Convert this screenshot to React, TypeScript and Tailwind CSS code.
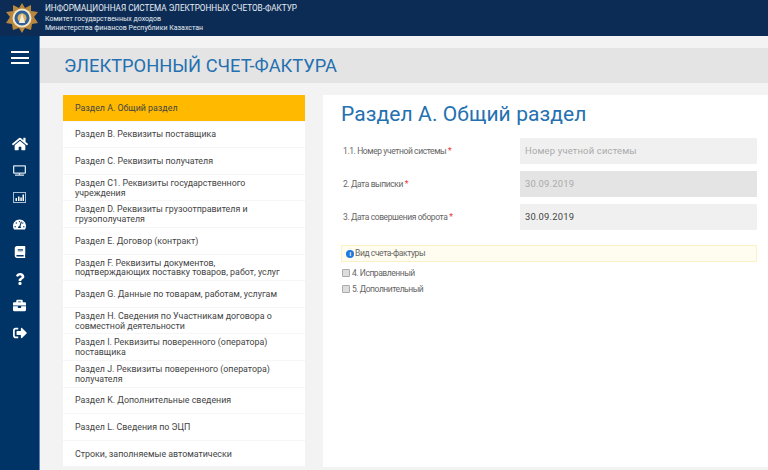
import { FaHome, FaTv, FaBook, FaQuestion, FaBriefcase, FaSignOutAlt, FaTachometerAlt } from "react-icons/fa";

const items: string[] = [
  "Раздел А. Общий раздел",
  "Раздел В. Реквизиты поставщика",
  "Раздел С. Реквизиты получателя",
  "Раздел С1. Реквизиты государственного учреждения",
  "Раздел D. Реквизиты грузоотправителя и грузополучателя",
  "Раздел Е. Договор (контракт)",
  "Раздел F. Реквизиты документов, подтверждающих поставку товаров, работ, услуг",
  "Раздел G. Данные по товарам, работам, услугам",
  "Раздел H. Сведения по Участникам договора о совместной деятельности",
  "Раздел I. Реквизиты поверенного (оператора) поставщика",
  "Раздел J. Реквизиты поверенного (оператора) получателя",
  "Раздел K. Дополнительные сведения",
  "Раздел L. Сведения по ЭЦП",
  "Строки, заполняемые автоматически",
];

function Logo() {
  return (
    <svg width="36" height="32" viewBox="0 0 36 32">
      <polygon
        points="18,1 21,6 27,3 27,9 34,10 30,15 34,21 28,22 27,28 21,26 18,31 15,26 9,28 8,22 2,21 6,15 2,10 9,9 9,3 15,6"
        fill="#b8863c"
      />
      <circle cx="18" cy="16" r="9.5" fill="#f2e6c8" />
      <circle cx="18" cy="16" r="7.5" fill="#2f5f98" />
      <circle cx="18" cy="16" r="4.5" fill="#d9b36a" />
      <path d="M15 21 L18 11 L21 21 Z" fill="#f5ecd6" />
    </svg>
  );
}

function ChartBox() {
  return (
    <svg width="13" height="11" viewBox="0 0 13 11">
      <rect x="0.5" y="0.5" width="12" height="10" fill="none" stroke="#a9bdd3" strokeWidth="1" />
      <rect x="2.5" y="6" width="1.5" height="3" fill="#fff" />
      <rect x="5" y="4.5" width="1.5" height="4.5" fill="#fff" />
      <rect x="7.3" y="5.5" width="1.5" height="3.5" fill="#fff" />
      <rect x="9.5" y="2.5" width="1.5" height="6.5" fill="#fff" />
    </svg>
  );
}

function Field({ label, children, cls }: { label: string; children: string; cls: string }) {
  return (
    <div className="flex h-[26px] items-center">
      <div className="w-[178px] shrink-0 pl-[1px] text-[8.5px] tracking-[-0.4px] text-[#666]">
        {label} <span className="text-[#e33]">*</span>
      </div>
      <div className={`flex h-[26px] flex-1 items-center pl-[5px] text-[9.4px] tracking-[0.2px] ${cls}`}>{children}</div>
    </div>
  );
}

export default function App() {
  return (
    <div className="flex h-[470px] w-[768px] flex-col overflow-hidden bg-[#f3f3f3] font-['Roboto',sans-serif]">
      <header className="flex h-[36px] shrink-0 items-center bg-[#0c2c55] pl-[4px] text-white">
        <Logo />
        <div className="ml-[5px] text-[#e8edf3]">
          <div className="mb-[2px] text-[8.2px] leading-[10px]">ИНФОРМАЦИОННАЯ СИСТЕМА ЭЛЕКТРОННЫХ СЧЕТОВ-ФАКТУР</div>
          <div className="text-[7px] leading-[9px]">Комитет государственных доходов</div>
          <div className="text-[7px] leading-[9px]">Министерства финансов Республики Казахстан</div>
        </div>
      </header>
      <div className="flex min-h-0 flex-1">
        <aside className="flex w-[40px] shrink-0 flex-col items-center border-r border-r-[#5f83ac] bg-[#003366] text-white">
          <div className="mt-[15px] flex flex-col gap-[3.5px]">
            <div className="h-[2px] w-[18px] bg-white" />
            <div className="h-[2px] w-[18px] bg-white" />
            <div className="h-[2px] w-[18px] bg-white" />
          </div>
          <div className="mt-[66px] flex flex-col items-center">
            <div className="flex h-[27px] items-center"><FaHome size={16} /></div>
            <div className="flex h-[27px] items-center text-[#dbe4ee]"><FaTv size={13} /></div>
            <div className="flex h-[27px] items-center"><ChartBox /></div>
            <div className="flex h-[27px] items-center"><FaTachometerAlt size={13} /></div>
            <div className="flex h-[27px] items-center"><FaBook size={12} /></div>
            <div className="flex h-[27px] items-center"><FaQuestion size={12} /></div>
            <div className="flex h-[27px] items-center"><FaBriefcase size={13} /></div>
            <div className="flex h-[27px] items-center"><FaSignOutAlt size={14} /></div>
          </div>
        </aside>
        <main className="min-w-0 flex-1">
          <div className="mt-[12px] flex h-[35px] items-center bg-[#e4e4e4] pl-[24px] text-[18.3px] text-[#2470b0]">
            ЭЛЕКТРОННЫЙ СЧЕТ-ФАКТУРА
          </div>
          <div className="mt-[12px] flex pl-[23px]">
            <nav className="w-[242px] shrink-0 bg-white">
              {items.map((t, i) => (
                <div
                  key={t}
                  className={`flex h-[26.6px] items-center border-b border-b-[#f6f6f6] pt-[2px] pl-[12px] pr-[20px] text-[8.85px] leading-[9.8px] text-[#444] ${i === 0 ? "bg-[#ffba00] text-[#5a4200]" : ""}`}
                >
                  {t}
                </div>
              ))}
            </nav>
            <section className="ml-[18px] h-[372px] flex-1 bg-white pl-[18px] pr-[11px]">
              <h1 className="mt-[7px] text-[21px] leading-[25px] tracking-[0.1px] text-[#2470b0]">Раздел А. Общий раздел</h1>
              <div className="mt-[11px] flex flex-col gap-[7px] pl-[1px]">
                <Field label="1.1. Номер учетной системы" cls="bg-[#f0f0f0] text-[#aaa]">Номер учетной системы</Field>
                <Field label="2. Дата выписки" cls="bg-[#e4e4e4] text-[#aaa]">30.09.2019</Field>
                <Field label="3. Дата совершения оборота" cls="bg-[#f0f0f0] text-[#444]">30.09.2019</Field>
              </div>
              <div className="mt-[15px] flex h-[17px] items-center gap-[1px] border border-[#fbf0c6] bg-[#fffdf0] pl-[4px] text-[8.5px] tracking-[-0.4px] text-[#666]">
                <span className="flex h-[8px] w-[8px] items-center justify-center rounded-full bg-[#1f7ae0] text-[6px] font-bold text-white">i</span>
                Вид счета-фактуры
              </div>
              <div className="mt-[3px] flex h-[16px] items-center gap-[2px] pl-[1px] text-[8.5px] tracking-[-0.45px] text-[#666]">
                <span className="h-[8px] w-[8px] rounded-[1px] border border-[#aaa] bg-[#ddd]" />
                4. Исправленный
              </div>
              <div className="mt-[0px] flex h-[16px] items-center gap-[2px] pl-[1px] text-[8.5px] tracking-[-0.45px] text-[#666]">
                <span className="h-[8px] w-[8px] rounded-[1px] border border-[#aaa] bg-[#ddd]" />
                5. Дополнительный
              </div>
            </section>
          </div>
        </main>
      </div>
    </div>
  );
}
